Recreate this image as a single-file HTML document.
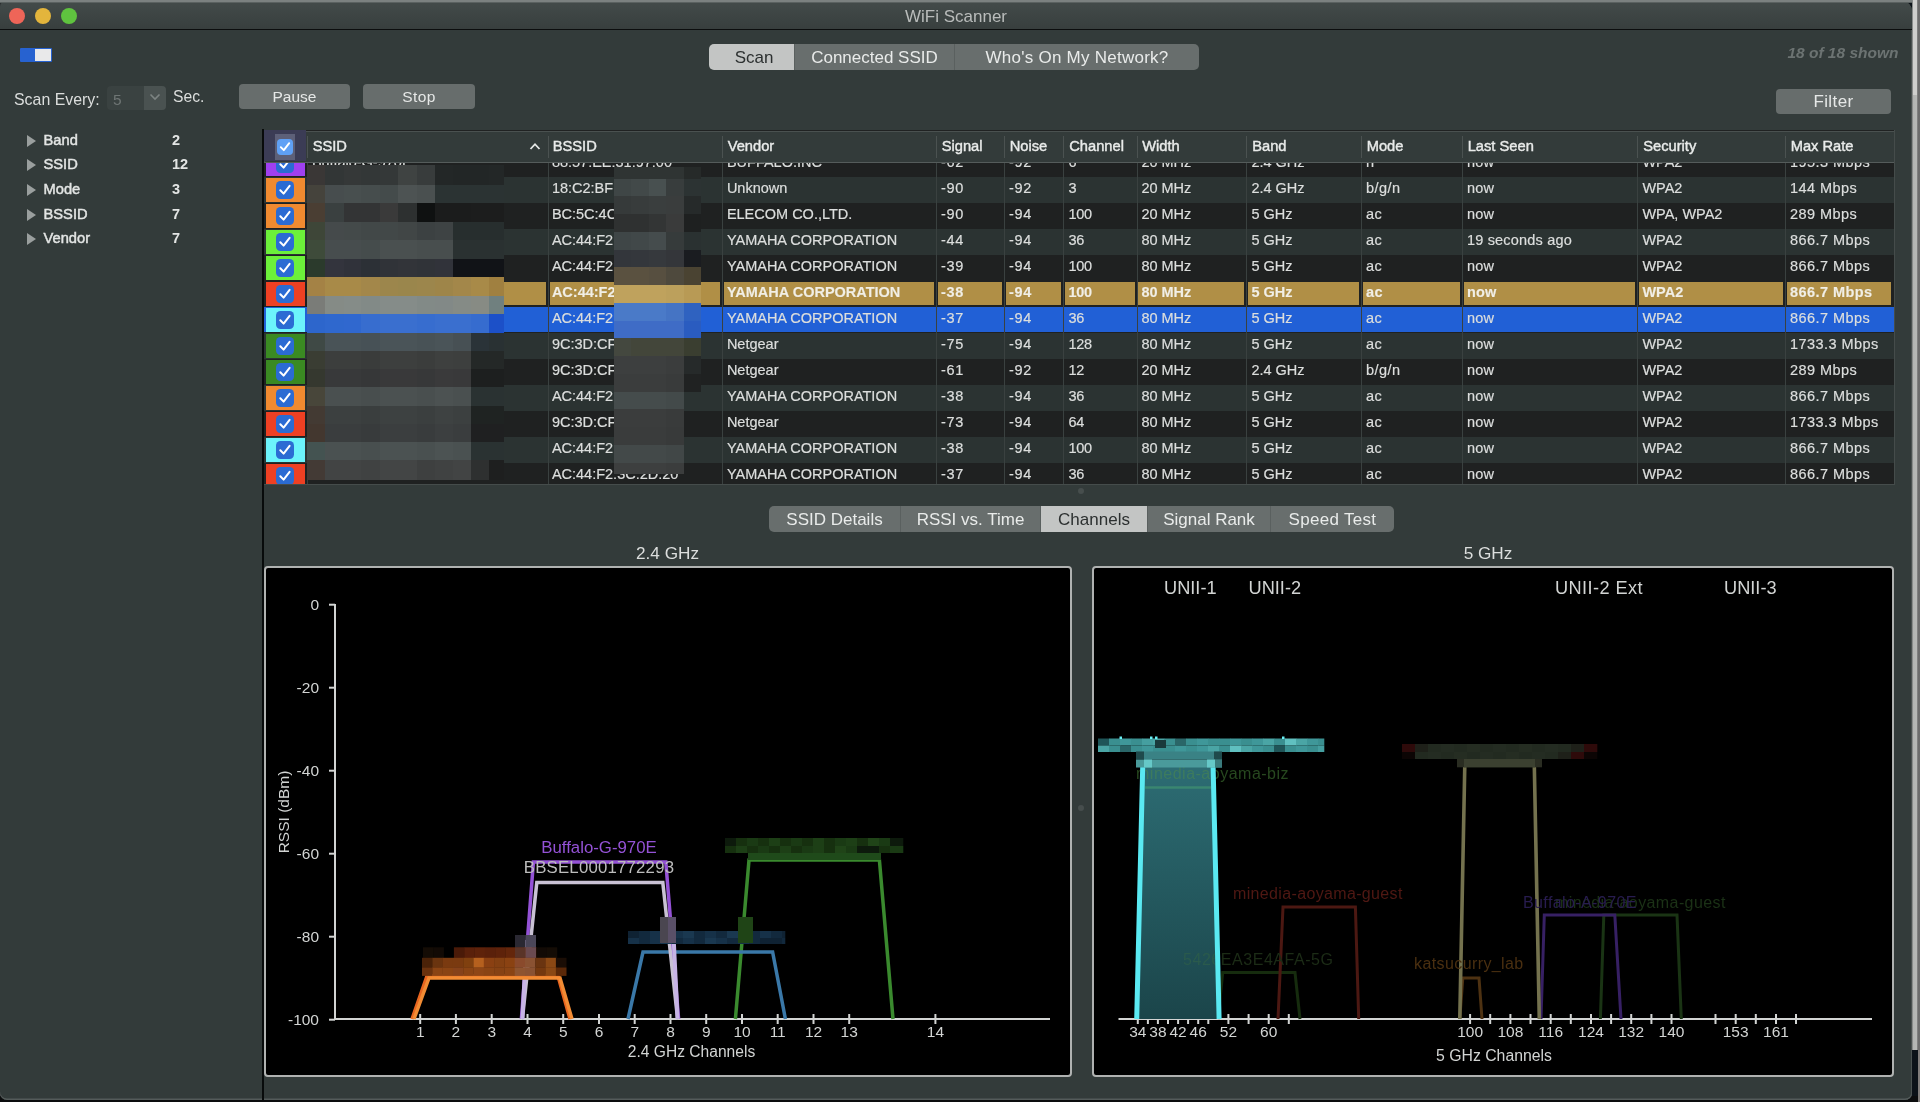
<!DOCTYPE html><html><head><meta charset='utf-8'><title>WiFi Scanner</title><style>
*{box-sizing:border-box;margin:0;padding:0}
html,body{width:1920px;height:1102px;overflow:hidden;background:#2a2e2e}
body{position:relative;font-family:"Liberation Sans",sans-serif;color:#e4e6e5;-webkit-font-smoothing:antialiased}
.abs{position:absolute}
#win{position:absolute;left:0;top:1px;width:1912px;height:1098.5px;background:#333b3a;border-radius:6px 10px 7px 7px;overflow:hidden;box-shadow:inset 0 -1.5px 0 #545b5a, inset -1px 0 0 #4a5150;will-change:transform}
#tbar{position:absolute;left:0;top:0;width:1912px;height:29px;background:linear-gradient(#434b4a,#383f3e);border-bottom:1px solid #0c0e0e}
.tl{position:absolute;top:6.6px;width:16.2px;height:16.2px;border-radius:50%}
#title{position:absolute;left:0;width:1912px;top:6px;text-align:center;font-size:17px;color:#b9bcbb;letter-spacing:0px}
.seg{position:absolute;display:flex;border-radius:5px;overflow:hidden;font-size:17px}
.seg div{height:100%;padding-top:2px;display:flex;align-items:center;justify-content:center;background:#686e6d;color:#e9ebea;border-right:1px solid #5a605f;white-space:nowrap}
.seg div.on{background:#c3c5c4;color:#2c3030}
.seg div:last-child{border-right:0}
.btn{position:absolute;background:#676d6c;border-radius:4px;color:#e6e8e7;font-size:15.5px;display:flex;align-items:center;justify-content:center}
.side{position:absolute;left:0;font-size:14.7px;font-weight:400;-webkit-text-stroke:0.45px #e3e5e4;color:#e3e5e4;height:20px;line-height:20px;width:250px}
.side i{position:absolute;left:27px;top:5.3px;width:0;height:0;border-left:9.6px solid #9a9f9e;border-top:6px solid transparent;border-bottom:6px solid transparent}
.side span{position:absolute;left:43.5px}
.side b{position:absolute;left:172px;-webkit-text-stroke:0;font-size:14.5px}
#tbl{position:absolute;left:263.7px;top:129px;width:1631px;height:354.5px;overflow:hidden;background:#202222}
.row{position:absolute;left:0;width:1631px;height:26px}
.row.l{background:#2b3332}.row.d{background:#1f2121}
.cell{position:absolute;top:-1.8px;height:26px;line-height:26px;font-size:14.5px;color:#dcdedd;-webkit-text-stroke:0.2px #dcdedd;white-space:nowrap;overflow:hidden}
.vsep{position:absolute;top:32px;width:1px;height:322px;background:#3a4140}
.sw{position:absolute;left:2.3px;top:1.4px;width:39.4px;height:23.8px}
.cb{position:absolute;left:10.2px;top:2.8px;width:18px;height:18px;border-radius:4.5px;background:#2b6bd3}
.cb svg{position:absolute;left:0;top:0}
#hdr{position:absolute;left:0;top:1.2px;width:1631px;height:32px;background:#333b3a;border:1px solid #4a5150;border-bottom:1px solid #555c5b}
.hc{position:absolute;top:-0.9px;height:30px;line-height:30px;font-size:14.7px;font-weight:400;-webkit-text-stroke:0.4px #e9ebea;color:#e9ebea;white-space:nowrap}
.hs{position:absolute;top:4px;width:1px;height:22px;background:#4b5251}
.gold .cell{color:#f3efe4;font-weight:700}
.g{position:absolute;top:1.9px;height:22.2px;background:#b08f46}
.m{position:absolute}
.panel{position:absolute;background:#000;border:2px solid #b0b2b1;border-radius:4px}
svg text{font-family:"Liberation Sans",sans-serif}
</style></head><body>
<div class='abs' style='left:1905px;top:0;width:15px;height:1102px;background:#0c1218'></div>
<div class='abs' style='left:1912px;top:0;width:8px;height:1050px;background:linear-gradient(90deg,#6a6d6c 0,#b2b4b2 1.2px,#b7b8b6 5.2px,#6d6d6d 5.6px,#6c6c6c 8px)'></div>
<div class='abs' style='left:1912.8px;top:0;width:4.5px;height:95px;background:#cfcfcd'></div>
<div class='abs' style='left:1917.5px;top:1050px;width:2.5px;height:52px;background:#807c7a'></div>
<div class='abs' style='left:0;top:1096px;width:1917.5px;height:6px;background:#0c0d0e'></div>
<div id='win'>
<div id='tbar'></div>
<div class='tl' style='left:8.8px;background:#ee6558'></div>
<div class='tl' style='left:34.7px;background:#e3b53c'></div>
<div class='tl' style='left:60.7px;background:#5fc33f'></div>
<div id='title'>WiFi Scanner</div>
<div class='abs' style='left:20px;top:47px;width:32px;height:14px;background:#2762d0;border-radius:1px'></div>
<div class='abs' style='left:35px;top:48px;width:16px;height:12px;background:#e9e9ea'></div>
<div class='seg' style='left:709px;top:43px;width:490px;height:26px'><div class='on' style='width:86px;padding-left:5px'>Scan</div><div style='width:160px'>Connected SSID</div><div style='width:244px;letter-spacing:0.25px'>Who's On My Network?</div></div>
<div class='abs' style='left:1778.5px;top:43px;width:120px;text-align:right;font-size:15.5px;font-weight:700;font-style:italic;color:#6c7372;white-space:nowrap'>18 of 18 shown</div>
<div class='abs' style='left:14px;top:90px;font-size:15.9px;color:#dcdedd;white-space:nowrap'>Scan Every:</div>
<div class='abs' style='left:107px;top:85px;width:59px;height:24px;background:#3a4241;border-radius:4px'></div>
<div class='abs' style='left:144px;top:85px;width:22px;height:24px;background:#4a5251;border-radius:0 4px 4px 0'></div>
<div class='abs' style='left:113px;top:90px;font-size:15.5px;color:#6e7574'>5</div>
<svg class='abs' style='left:149px;top:92px' width='12' height='8'><path d='M1.5 1.5 L6 6 L10.5 1.5' fill='none' stroke='#7d8483' stroke-width='1.6'/></svg>
<div class='abs' style='left:173px;top:87px;font-size:15.7px;color:#dcdedd'>Sec.</div>
<div class='btn' style='left:239px;top:83px;width:111px;height:25px'>Pause</div>
<div class='btn' style='left:363px;top:83px;width:112px;height:25px;letter-spacing:0.4px'>Stop</div>
<div class='btn' style='left:1776px;top:88px;width:115px;height:25px;font-size:17px;letter-spacing:0.4px'>Filter</div>
<div class='side' style='top:128.5px'><i></i><span>Band</span><b>2</b></div>
<div class='side' style='top:153.2px'><i></i><span>SSID</span><b>12</b></div>
<div class='side' style='top:177.8px'><i></i><span>Mode</span><b>3</b></div>
<div class='side' style='top:202.5px'><i></i><span>BSSID</span><b>7</b></div>
<div class='side' style='top:227.2px'><i></i><span>Vendor</span><b>7</b></div>
<div class='abs' style='left:262px;top:128px;width:2px;height:972px;background:#080b0b'></div>
<div id='tbl'>
<div class='row d' style='top:20.6px'>
<div class='sw' style='background:#a040f0'><div class='cb'><svg width='18' height='18'><path d='M4.3 9.2 L7.6 12.6 L13.6 4.8' fill='none' stroke='#fff' stroke-width='2' stroke-linecap='round' stroke-linejoin='round'/></svg></div></div>
<div class='cell' style='left:48.2px;width:233.8px'>Buffalo-G-970E</div>
<div class='cell' style='left:288.2px;width:167.8px'>88:57:EE:31:97:00</div>
<div class='cell' style='left:463.2px;width:206.8px'>BUFFALO.INC</div>
<div class='cell' style='left:677.2px;width:60.799999999999955px;letter-spacing:0.75px'>-62</div>
<div class='cell' style='left:745.2px;width:51.799999999999955px;letter-spacing:0.75px'>-92</div>
<div class='cell' style='left:804.7px;width:65.79999999999995px;letter-spacing:-0.2px'>6</div>
<div class='cell' style='left:877.7px;width:102.29999999999995px'>20 MHz</div>
<div class='cell' style='left:987.7px;width:107.29999999999995px'>2.4 GHz</div>
<div class='cell' style='left:1102.2px;width:93.79999999999995px;letter-spacing:0.5px'>n</div>
<div class='cell' style='left:1203.2px;width:167.79999999999995px;letter-spacing:0.2px'>now</div>
<div class='cell' style='left:1378.7px;width:140.29999999999995px'>WPA2</div>
<div class='cell' style='left:1526.2px;width:100.79999999999995px;letter-spacing:0.45px'>195.3 Mbps</div>
</div>
<div class='row l' style='top:46.6px'>
<div class='sw' style='background:#f08a30'><div class='cb'><svg width='18' height='18'><path d='M4.3 9.2 L7.6 12.6 L13.6 4.8' fill='none' stroke='#fff' stroke-width='2' stroke-linecap='round' stroke-linejoin='round'/></svg></div></div>
<div class='cell' style='left:288.2px;width:167.8px'>18:C2:BF</div>
<div class='cell' style='left:463.2px;width:206.8px'>Unknown</div>
<div class='cell' style='left:677.2px;width:60.799999999999955px;letter-spacing:0.75px'>-90</div>
<div class='cell' style='left:745.2px;width:51.799999999999955px;letter-spacing:0.75px'>-92</div>
<div class='cell' style='left:804.7px;width:65.79999999999995px;letter-spacing:-0.2px'>3</div>
<div class='cell' style='left:877.7px;width:102.29999999999995px'>20 MHz</div>
<div class='cell' style='left:987.7px;width:107.29999999999995px'>2.4 GHz</div>
<div class='cell' style='left:1102.2px;width:93.79999999999995px;letter-spacing:0.5px'>b/g/n</div>
<div class='cell' style='left:1203.2px;width:167.79999999999995px;letter-spacing:0.2px'>now</div>
<div class='cell' style='left:1378.7px;width:140.29999999999995px'>WPA2</div>
<div class='cell' style='left:1526.2px;width:100.79999999999995px;letter-spacing:0.45px'>144 Mbps</div>
</div>
<div class='row d' style='top:72.6px'>
<div class='sw' style='background:#f08a30'><div class='cb'><svg width='18' height='18'><path d='M4.3 9.2 L7.6 12.6 L13.6 4.8' fill='none' stroke='#fff' stroke-width='2' stroke-linecap='round' stroke-linejoin='round'/></svg></div></div>
<div class='cell' style='left:288.2px;width:167.8px'>BC:5C:4C</div>
<div class='cell' style='left:463.2px;width:206.8px'>ELECOM CO.,LTD.</div>
<div class='cell' style='left:677.2px;width:60.799999999999955px;letter-spacing:0.75px'>-90</div>
<div class='cell' style='left:745.2px;width:51.799999999999955px;letter-spacing:0.75px'>-94</div>
<div class='cell' style='left:804.7px;width:65.79999999999995px;letter-spacing:-0.2px'>100</div>
<div class='cell' style='left:877.7px;width:102.29999999999995px'>20 MHz</div>
<div class='cell' style='left:987.7px;width:107.29999999999995px'>5 GHz</div>
<div class='cell' style='left:1102.2px;width:93.79999999999995px;letter-spacing:0.5px'>ac</div>
<div class='cell' style='left:1203.2px;width:167.79999999999995px;letter-spacing:0.2px'>now</div>
<div class='cell' style='left:1378.7px;width:140.29999999999995px'>WPA, WPA2</div>
<div class='cell' style='left:1526.2px;width:100.79999999999995px;letter-spacing:0.45px'>289 Mbps</div>
</div>
<div class='row l' style='top:98.6px'>
<div class='sw' style='background:#6cf03a'><div class='cb'><svg width='18' height='18'><path d='M4.3 9.2 L7.6 12.6 L13.6 4.8' fill='none' stroke='#fff' stroke-width='2' stroke-linecap='round' stroke-linejoin='round'/></svg></div></div>
<div class='cell' style='left:288.2px;width:167.8px'>AC:44:F2</div>
<div class='cell' style='left:463.2px;width:206.8px'>YAMAHA CORPORATION</div>
<div class='cell' style='left:677.2px;width:60.799999999999955px;letter-spacing:0.75px'>-44</div>
<div class='cell' style='left:745.2px;width:51.799999999999955px;letter-spacing:0.75px'>-94</div>
<div class='cell' style='left:804.7px;width:65.79999999999995px;letter-spacing:-0.2px'>36</div>
<div class='cell' style='left:877.7px;width:102.29999999999995px'>80 MHz</div>
<div class='cell' style='left:987.7px;width:107.29999999999995px'>5 GHz</div>
<div class='cell' style='left:1102.2px;width:93.79999999999995px;letter-spacing:0.5px'>ac</div>
<div class='cell' style='left:1203.2px;width:167.79999999999995px;letter-spacing:0.2px'>19 seconds ago</div>
<div class='cell' style='left:1378.7px;width:140.29999999999995px'>WPA2</div>
<div class='cell' style='left:1526.2px;width:100.79999999999995px;letter-spacing:0.45px'>866.7 Mbps</div>
</div>
<div class='row d' style='top:124.6px'>
<div class='sw' style='background:#6cf03a'><div class='cb'><svg width='18' height='18'><path d='M4.3 9.2 L7.6 12.6 L13.6 4.8' fill='none' stroke='#fff' stroke-width='2' stroke-linecap='round' stroke-linejoin='round'/></svg></div></div>
<div class='cell' style='left:288.2px;width:167.8px'>AC:44:F2</div>
<div class='cell' style='left:463.2px;width:206.8px'>YAMAHA CORPORATION</div>
<div class='cell' style='left:677.2px;width:60.799999999999955px;letter-spacing:0.75px'>-39</div>
<div class='cell' style='left:745.2px;width:51.799999999999955px;letter-spacing:0.75px'>-94</div>
<div class='cell' style='left:804.7px;width:65.79999999999995px;letter-spacing:-0.2px'>100</div>
<div class='cell' style='left:877.7px;width:102.29999999999995px'>80 MHz</div>
<div class='cell' style='left:987.7px;width:107.29999999999995px'>5 GHz</div>
<div class='cell' style='left:1102.2px;width:93.79999999999995px;letter-spacing:0.5px'>ac</div>
<div class='cell' style='left:1203.2px;width:167.79999999999995px;letter-spacing:0.2px'>now</div>
<div class='cell' style='left:1378.7px;width:140.29999999999995px'>WPA2</div>
<div class='cell' style='left:1526.2px;width:100.79999999999995px;letter-spacing:0.45px'>866.7 Mbps</div>
</div>
<div class='row d gold' style='top:150.6px'>
<div class='g' style='left:44px;width:238.5px'></div>
<div class='g' style='left:286px;width:170.5px'></div>
<div class='g' style='left:460px;width:210.5px'></div>
<div class='g' style='left:674px;width:64.5px'></div>
<div class='g' style='left:742px;width:55.5px'></div>
<div class='g' style='left:801px;width:70.0px'></div>
<div class='g' style='left:874.5px;width:106.0px'></div>
<div class='g' style='left:984px;width:111.5px'></div>
<div class='g' style='left:1099px;width:97.5px'></div>
<div class='g' style='left:1200px;width:171.5px'></div>
<div class='g' style='left:1375px;width:144.5px'></div>
<div class='g' style='left:1523px;width:104.5px'></div>
<div class='sw' style='background:#ee4023'><div class='cb'><svg width='18' height='18'><path d='M4.3 9.2 L7.6 12.6 L13.6 4.8' fill='none' stroke='#fff' stroke-width='2' stroke-linecap='round' stroke-linejoin='round'/></svg></div></div>
<div class='cell' style='left:288.2px;width:167.8px'>AC:44:F2</div>
<div class='cell' style='left:463.2px;width:206.8px'>YAMAHA CORPORATION</div>
<div class='cell' style='left:677.2px;width:60.799999999999955px;letter-spacing:0.75px'>-38</div>
<div class='cell' style='left:745.2px;width:51.799999999999955px;letter-spacing:0.75px'>-94</div>
<div class='cell' style='left:804.7px;width:65.79999999999995px;letter-spacing:-0.2px'>100</div>
<div class='cell' style='left:877.7px;width:102.29999999999995px'>80 MHz</div>
<div class='cell' style='left:987.7px;width:107.29999999999995px'>5 GHz</div>
<div class='cell' style='left:1102.2px;width:93.79999999999995px;letter-spacing:0.5px'>ac</div>
<div class='cell' style='left:1203.2px;width:167.79999999999995px;letter-spacing:0.2px'>now</div>
<div class='cell' style='left:1378.7px;width:140.29999999999995px'>WPA2</div>
<div class='cell' style='left:1526.2px;width:100.79999999999995px;letter-spacing:0.45px'>866.7 Mbps</div>
</div>
<div class='row d' style='top:176.6px;background:linear-gradient(#1f2121 0,#1f2121 0.4px,#2160d6 0.4px,#2160d6 25px,#1f2121 25px)'>
<div class='sw' style='background:#6cf3fb'><div class='cb'><svg width='18' height='18'><path d='M4.3 9.2 L7.6 12.6 L13.6 4.8' fill='none' stroke='#fff' stroke-width='2' stroke-linecap='round' stroke-linejoin='round'/></svg></div></div>
<div class='cell' style='left:288.2px;width:167.8px'>AC:44:F2</div>
<div class='cell' style='left:463.2px;width:206.8px'>YAMAHA CORPORATION</div>
<div class='cell' style='left:677.2px;width:60.799999999999955px;letter-spacing:0.75px'>-37</div>
<div class='cell' style='left:745.2px;width:51.799999999999955px;letter-spacing:0.75px'>-94</div>
<div class='cell' style='left:804.7px;width:65.79999999999995px;letter-spacing:-0.2px'>36</div>
<div class='cell' style='left:877.7px;width:102.29999999999995px'>80 MHz</div>
<div class='cell' style='left:987.7px;width:107.29999999999995px'>5 GHz</div>
<div class='cell' style='left:1102.2px;width:93.79999999999995px;letter-spacing:0.5px'>ac</div>
<div class='cell' style='left:1203.2px;width:167.79999999999995px;letter-spacing:0.2px'>now</div>
<div class='cell' style='left:1378.7px;width:140.29999999999995px'>WPA2</div>
<div class='cell' style='left:1526.2px;width:100.79999999999995px;letter-spacing:0.45px'>866.7 Mbps</div>
</div>
<div class='row l' style='top:202.6px'>
<div class='sw' style='background:#3a8a22'><div class='cb'><svg width='18' height='18'><path d='M4.3 9.2 L7.6 12.6 L13.6 4.8' fill='none' stroke='#fff' stroke-width='2' stroke-linecap='round' stroke-linejoin='round'/></svg></div></div>
<div class='cell' style='left:288.2px;width:167.8px'>9C:3D:CF</div>
<div class='cell' style='left:463.2px;width:206.8px'>Netgear</div>
<div class='cell' style='left:677.2px;width:60.799999999999955px;letter-spacing:0.75px'>-75</div>
<div class='cell' style='left:745.2px;width:51.799999999999955px;letter-spacing:0.75px'>-94</div>
<div class='cell' style='left:804.7px;width:65.79999999999995px;letter-spacing:-0.2px'>128</div>
<div class='cell' style='left:877.7px;width:102.29999999999995px'>80 MHz</div>
<div class='cell' style='left:987.7px;width:107.29999999999995px'>5 GHz</div>
<div class='cell' style='left:1102.2px;width:93.79999999999995px;letter-spacing:0.5px'>ac</div>
<div class='cell' style='left:1203.2px;width:167.79999999999995px;letter-spacing:0.2px'>now</div>
<div class='cell' style='left:1378.7px;width:140.29999999999995px'>WPA2</div>
<div class='cell' style='left:1526.2px;width:100.79999999999995px;letter-spacing:0.45px'>1733.3 Mbps</div>
</div>
<div class='row d' style='top:228.6px'>
<div class='sw' style='background:#3a8a22'><div class='cb'><svg width='18' height='18'><path d='M4.3 9.2 L7.6 12.6 L13.6 4.8' fill='none' stroke='#fff' stroke-width='2' stroke-linecap='round' stroke-linejoin='round'/></svg></div></div>
<div class='cell' style='left:288.2px;width:167.8px'>9C:3D:CF</div>
<div class='cell' style='left:463.2px;width:206.8px'>Netgear</div>
<div class='cell' style='left:677.2px;width:60.799999999999955px;letter-spacing:0.75px'>-61</div>
<div class='cell' style='left:745.2px;width:51.799999999999955px;letter-spacing:0.75px'>-92</div>
<div class='cell' style='left:804.7px;width:65.79999999999995px;letter-spacing:-0.2px'>12</div>
<div class='cell' style='left:877.7px;width:102.29999999999995px'>20 MHz</div>
<div class='cell' style='left:987.7px;width:107.29999999999995px'>2.4 GHz</div>
<div class='cell' style='left:1102.2px;width:93.79999999999995px;letter-spacing:0.5px'>b/g/n</div>
<div class='cell' style='left:1203.2px;width:167.79999999999995px;letter-spacing:0.2px'>now</div>
<div class='cell' style='left:1378.7px;width:140.29999999999995px'>WPA2</div>
<div class='cell' style='left:1526.2px;width:100.79999999999995px;letter-spacing:0.45px'>289 Mbps</div>
</div>
<div class='row l' style='top:254.6px'>
<div class='sw' style='background:#f08a30'><div class='cb'><svg width='18' height='18'><path d='M4.3 9.2 L7.6 12.6 L13.6 4.8' fill='none' stroke='#fff' stroke-width='2' stroke-linecap='round' stroke-linejoin='round'/></svg></div></div>
<div class='cell' style='left:288.2px;width:167.8px'>AC:44:F2</div>
<div class='cell' style='left:463.2px;width:206.8px'>YAMAHA CORPORATION</div>
<div class='cell' style='left:677.2px;width:60.799999999999955px;letter-spacing:0.75px'>-38</div>
<div class='cell' style='left:745.2px;width:51.799999999999955px;letter-spacing:0.75px'>-94</div>
<div class='cell' style='left:804.7px;width:65.79999999999995px;letter-spacing:-0.2px'>36</div>
<div class='cell' style='left:877.7px;width:102.29999999999995px'>80 MHz</div>
<div class='cell' style='left:987.7px;width:107.29999999999995px'>5 GHz</div>
<div class='cell' style='left:1102.2px;width:93.79999999999995px;letter-spacing:0.5px'>ac</div>
<div class='cell' style='left:1203.2px;width:167.79999999999995px;letter-spacing:0.2px'>now</div>
<div class='cell' style='left:1378.7px;width:140.29999999999995px'>WPA2</div>
<div class='cell' style='left:1526.2px;width:100.79999999999995px;letter-spacing:0.45px'>866.7 Mbps</div>
</div>
<div class='row d' style='top:280.6px'>
<div class='sw' style='background:#ee4023'><div class='cb'><svg width='18' height='18'><path d='M4.3 9.2 L7.6 12.6 L13.6 4.8' fill='none' stroke='#fff' stroke-width='2' stroke-linecap='round' stroke-linejoin='round'/></svg></div></div>
<div class='cell' style='left:288.2px;width:167.8px'>9C:3D:CF</div>
<div class='cell' style='left:463.2px;width:206.8px'>Netgear</div>
<div class='cell' style='left:677.2px;width:60.799999999999955px;letter-spacing:0.75px'>-73</div>
<div class='cell' style='left:745.2px;width:51.799999999999955px;letter-spacing:0.75px'>-94</div>
<div class='cell' style='left:804.7px;width:65.79999999999995px;letter-spacing:-0.2px'>64</div>
<div class='cell' style='left:877.7px;width:102.29999999999995px'>80 MHz</div>
<div class='cell' style='left:987.7px;width:107.29999999999995px'>5 GHz</div>
<div class='cell' style='left:1102.2px;width:93.79999999999995px;letter-spacing:0.5px'>ac</div>
<div class='cell' style='left:1203.2px;width:167.79999999999995px;letter-spacing:0.2px'>now</div>
<div class='cell' style='left:1378.7px;width:140.29999999999995px'>WPA2</div>
<div class='cell' style='left:1526.2px;width:100.79999999999995px;letter-spacing:0.45px'>1733.3 Mbps</div>
</div>
<div class='row l' style='top:306.6px'>
<div class='sw' style='background:#6cf3fb'><div class='cb'><svg width='18' height='18'><path d='M4.3 9.2 L7.6 12.6 L13.6 4.8' fill='none' stroke='#fff' stroke-width='2' stroke-linecap='round' stroke-linejoin='round'/></svg></div></div>
<div class='cell' style='left:288.2px;width:167.8px'>AC:44:F2</div>
<div class='cell' style='left:463.2px;width:206.8px'>YAMAHA CORPORATION</div>
<div class='cell' style='left:677.2px;width:60.799999999999955px;letter-spacing:0.75px'>-38</div>
<div class='cell' style='left:745.2px;width:51.799999999999955px;letter-spacing:0.75px'>-94</div>
<div class='cell' style='left:804.7px;width:65.79999999999995px;letter-spacing:-0.2px'>100</div>
<div class='cell' style='left:877.7px;width:102.29999999999995px'>80 MHz</div>
<div class='cell' style='left:987.7px;width:107.29999999999995px'>5 GHz</div>
<div class='cell' style='left:1102.2px;width:93.79999999999995px;letter-spacing:0.5px'>ac</div>
<div class='cell' style='left:1203.2px;width:167.79999999999995px;letter-spacing:0.2px'>now</div>
<div class='cell' style='left:1378.7px;width:140.29999999999995px'>WPA2</div>
<div class='cell' style='left:1526.2px;width:100.79999999999995px;letter-spacing:0.45px'>866.7 Mbps</div>
</div>
<div class='row d' style='top:332.6px'>
<div class='sw' style='background:#ee4023'><div class='cb'><svg width='18' height='18'><path d='M4.3 9.2 L7.6 12.6 L13.6 4.8' fill='none' stroke='#fff' stroke-width='2' stroke-linecap='round' stroke-linejoin='round'/></svg></div></div>
<div class='cell' style='left:288.2px;width:167.8px'>AC:44:F2:3C:2D:20</div>
<div class='cell' style='left:463.2px;width:206.8px'>YAMAHA CORPORATION</div>
<div class='cell' style='left:677.2px;width:60.799999999999955px;letter-spacing:0.75px'>-37</div>
<div class='cell' style='left:745.2px;width:51.799999999999955px;letter-spacing:0.75px'>-94</div>
<div class='cell' style='left:804.7px;width:65.79999999999995px;letter-spacing:-0.2px'>36</div>
<div class='cell' style='left:877.7px;width:102.29999999999995px'>80 MHz</div>
<div class='cell' style='left:987.7px;width:107.29999999999995px'>5 GHz</div>
<div class='cell' style='left:1102.2px;width:93.79999999999995px;letter-spacing:0.5px'>ac</div>
<div class='cell' style='left:1203.2px;width:167.79999999999995px;letter-spacing:0.2px'>now</div>
<div class='cell' style='left:1378.7px;width:140.29999999999995px'>WPA2</div>
<div class='cell' style='left:1526.2px;width:100.79999999999995px;letter-spacing:0.45px'>866.7 Mbps</div>
</div>
<div class='vsep' style='left:284.5px'></div>
<div class='vsep' style='left:458.5px'></div>
<div class='vsep' style='left:672.5px'></div>
<div class='vsep' style='left:740.5px'></div>
<div class='vsep' style='left:799.5px'></div>
<div class='vsep' style='left:873.0px'></div>
<div class='vsep' style='left:982.5px'></div>
<div class='vsep' style='left:1097.5px'></div>
<div class='vsep' style='left:1198.5px'></div>
<div class='vsep' style='left:1373.5px'></div>
<div class='vsep' style='left:1521.5px'></div>
<div class='vsep' style='left:43px'></div>
<div class='m' style='left:43.7px;top:35.4px;width:18.1px;height:19.6px;background:#3a3736'></div>
<div class='m' style='left:61.5px;top:35.4px;width:18.8px;height:19.6px;background:#323636'></div>
<div class='m' style='left:80px;top:35.4px;width:18.0px;height:19.6px;background:#353838'></div>
<div class='m' style='left:97.7px;top:35.4px;width:18.8px;height:19.6px;background:#333737'></div>
<div class='m' style='left:116.2px;top:35.4px;width:18.9px;height:19.6px;background:#343838'></div>
<div class='m' style='left:134.8px;top:35.4px;width:18.8px;height:19.6px;background:#3f4342'></div>
<div class='m' style='left:153.3px;top:35.4px;width:18.0px;height:19.6px;background:#383c3c'></div>
<div class='m' style='left:171px;top:35.4px;width:18.8px;height:19.6px;background:#232727'></div>
<div class='m' style='left:189.5px;top:35.4px;width:18.1px;height:19.6px;background:#222626'></div>
<div class='m' style='left:207.3px;top:35.4px;width:18.8px;height:19.6px;background:#222626'></div>
<div class='m' style='left:225.8px;top:35.4px;width:15.0px;height:19.6px;background:#232727'></div>
<div class='m' style='left:43.7px;top:54.7px;width:18.1px;height:18.8px;background:#45433c'></div>
<div class='m' style='left:61.5px;top:54.7px;width:18.8px;height:18.8px;background:#474d4e'></div>
<div class='m' style='left:80px;top:54.7px;width:18.0px;height:18.8px;background:#484f4f'></div>
<div class='m' style='left:97.7px;top:54.7px;width:18.8px;height:18.8px;background:#464d4d'></div>
<div class='m' style='left:116.2px;top:54.7px;width:18.9px;height:18.8px;background:#444b4b'></div>
<div class='m' style='left:134.8px;top:54.7px;width:18.8px;height:18.8px;background:#4d5353'></div>
<div class='m' style='left:153.3px;top:54.7px;width:18.0px;height:18.8px;background:#4a5050'></div>
<div class='m' style='left:171px;top:54.7px;width:18.8px;height:18.8px;background:#2b3333'></div>
<div class='m' style='left:189.5px;top:54.7px;width:18.1px;height:18.8px;background:#2b3333'></div>
<div class='m' style='left:207.3px;top:54.7px;width:18.8px;height:18.8px;background:#2b3333'></div>
<div class='m' style='left:225.8px;top:54.7px;width:15.0px;height:18.8px;background:#2b3333'></div>
<div class='m' style='left:43.7px;top:73.2px;width:18.1px;height:18.8px;background:#4a3e33'></div>
<div class='m' style='left:61.5px;top:73.2px;width:18.8px;height:18.8px;background:#3a4040'></div>
<div class='m' style='left:80px;top:73.2px;width:18.0px;height:18.8px;background:#333435'></div>
<div class='m' style='left:97.7px;top:73.2px;width:18.8px;height:18.8px;background:#333435'></div>
<div class='m' style='left:116.2px;top:73.2px;width:18.9px;height:18.8px;background:#3a3a3a'></div>
<div class='m' style='left:134.8px;top:73.2px;width:18.8px;height:18.8px;background:#2d3030'></div>
<div class='m' style='left:153.3px;top:73.2px;width:18.0px;height:18.8px;background:#0f1111'></div>
<div class='m' style='left:171px;top:73.2px;width:18.8px;height:18.8px;background:#1b1c1c'></div>
<div class='m' style='left:189.5px;top:73.2px;width:18.1px;height:18.8px;background:#1b1c1c'></div>
<div class='m' style='left:207.3px;top:73.2px;width:18.8px;height:18.8px;background:#1c1d1d'></div>
<div class='m' style='left:225.8px;top:73.2px;width:15.0px;height:18.8px;background:#1c1d1d'></div>
<div class='m' style='left:43.7px;top:91.7px;width:18.1px;height:18.8px;background:#3e4638'></div>
<div class='m' style='left:61.5px;top:91.7px;width:18.8px;height:18.8px;background:#454a4b'></div>
<div class='m' style='left:80px;top:91.7px;width:18.0px;height:18.8px;background:#444a4a'></div>
<div class='m' style='left:97.7px;top:91.7px;width:18.8px;height:18.8px;background:#424848'></div>
<div class='m' style='left:116.2px;top:91.7px;width:18.9px;height:18.8px;background:#424848'></div>
<div class='m' style='left:134.8px;top:91.7px;width:18.8px;height:18.8px;background:#414646'></div>
<div class='m' style='left:153.3px;top:91.7px;width:18.0px;height:18.8px;background:#3c4142'></div>
<div class='m' style='left:171px;top:91.7px;width:18.8px;height:18.8px;background:#3e4344'></div>
<div class='m' style='left:189.5px;top:91.7px;width:18.1px;height:18.8px;background:#272e2e'></div>
<div class='m' style='left:207.3px;top:91.7px;width:18.8px;height:18.8px;background:#272e2e'></div>
<div class='m' style='left:225.8px;top:91.7px;width:15.0px;height:18.8px;background:#272e2e'></div>
<div class='m' style='left:43.7px;top:110.2px;width:18.1px;height:18.8px;background:#3e4b3a'></div>
<div class='m' style='left:61.5px;top:110.2px;width:18.8px;height:18.8px;background:#474d4e'></div>
<div class='m' style='left:80px;top:110.2px;width:18.0px;height:18.8px;background:#474d4e'></div>
<div class='m' style='left:97.7px;top:110.2px;width:18.8px;height:18.8px;background:#454c4c'></div>
<div class='m' style='left:116.2px;top:110.2px;width:18.9px;height:18.8px;background:#4a5050'></div>
<div class='m' style='left:134.8px;top:110.2px;width:18.8px;height:18.8px;background:#4a5050'></div>
<div class='m' style='left:153.3px;top:110.2px;width:18.0px;height:18.8px;background:#484e4e'></div>
<div class='m' style='left:171px;top:110.2px;width:18.8px;height:18.8px;background:#484e4e'></div>
<div class='m' style='left:189.5px;top:110.2px;width:18.1px;height:18.8px;background:#2a3131'></div>
<div class='m' style='left:207.3px;top:110.2px;width:18.8px;height:18.8px;background:#2a3131'></div>
<div class='m' style='left:225.8px;top:110.2px;width:15.0px;height:18.8px;background:#2a3131'></div>
<div class='m' style='left:43.7px;top:128.7px;width:18.1px;height:18.8px;background:#2b3a2c'></div>
<div class='m' style='left:61.5px;top:128.7px;width:18.8px;height:18.8px;background:#33343d'></div>
<div class='m' style='left:80px;top:128.7px;width:18.0px;height:18.8px;background:#30323a'></div>
<div class='m' style='left:97.7px;top:128.7px;width:18.8px;height:18.8px;background:#2c3036'></div>
<div class='m' style='left:116.2px;top:128.7px;width:18.9px;height:18.8px;background:#303338'></div>
<div class='m' style='left:134.8px;top:128.7px;width:18.8px;height:18.8px;background:#323439'></div>
<div class='m' style='left:153.3px;top:128.7px;width:18.0px;height:18.8px;background:#303338'></div>
<div class='m' style='left:171px;top:128.7px;width:18.8px;height:18.8px;background:#31333a'></div>
<div class='m' style='left:189.5px;top:128.7px;width:18.1px;height:18.8px;background:#111317'></div>
<div class='m' style='left:207.3px;top:128.7px;width:18.8px;height:18.8px;background:#111317'></div>
<div class='m' style='left:225.8px;top:128.7px;width:15.0px;height:18.8px;background:#111317'></div>
<div class='m' style='left:43.7px;top:147.2px;width:18.1px;height:18.8px;background:#a48245'></div>
<div class='m' style='left:61.5px;top:147.2px;width:18.8px;height:18.8px;background:#a88a48'></div>
<div class='m' style='left:80px;top:147.2px;width:18.0px;height:18.8px;background:#a88a48'></div>
<div class='m' style='left:97.7px;top:147.2px;width:18.8px;height:18.8px;background:#a3874a'></div>
<div class='m' style='left:116.2px;top:147.2px;width:18.9px;height:18.8px;background:#9c864c'></div>
<div class='m' style='left:134.8px;top:147.2px;width:18.8px;height:18.8px;background:#9a864c'></div>
<div class='m' style='left:153.3px;top:147.2px;width:18.0px;height:18.8px;background:#9c864c'></div>
<div class='m' style='left:171px;top:147.2px;width:18.8px;height:18.8px;background:#9e8549'></div>
<div class='m' style='left:189.5px;top:147.2px;width:18.1px;height:18.8px;background:#a3874a'></div>
<div class='m' style='left:207.3px;top:147.2px;width:18.8px;height:18.8px;background:#a88a48'></div>
<div class='m' style='left:225.8px;top:147.2px;width:15.0px;height:18.8px;background:#a08040'></div>
<div class='m' style='left:43.7px;top:165.7px;width:18.1px;height:18.8px;background:#7a7c78'></div>
<div class='m' style='left:61.5px;top:165.7px;width:18.8px;height:18.8px;background:#858b86'></div>
<div class='m' style='left:80px;top:165.7px;width:18.0px;height:18.8px;background:#858c88'></div>
<div class='m' style='left:97.7px;top:165.7px;width:18.8px;height:18.8px;background:#828a87'></div>
<div class='m' style='left:116.2px;top:165.7px;width:18.9px;height:18.8px;background:#858c89'></div>
<div class='m' style='left:134.8px;top:165.7px;width:18.8px;height:18.8px;background:#858c89'></div>
<div class='m' style='left:153.3px;top:165.7px;width:18.0px;height:18.8px;background:#828a87'></div>
<div class='m' style='left:171px;top:165.7px;width:18.8px;height:18.8px;background:#828987'></div>
<div class='m' style='left:189.5px;top:165.7px;width:18.1px;height:18.8px;background:#858b86'></div>
<div class='m' style='left:207.3px;top:165.7px;width:18.8px;height:18.8px;background:#878b84'></div>
<div class='m' style='left:225.8px;top:165.7px;width:15.0px;height:18.8px;background:#70807f'></div>
<div class='m' style='left:43.7px;top:184.2px;width:18.1px;height:18.8px;background:#2d66cc'></div>
<div class='m' style='left:61.5px;top:184.2px;width:18.8px;height:18.8px;background:#2f68ce'></div>
<div class='m' style='left:80px;top:184.2px;width:18.0px;height:18.8px;background:#3068cf'></div>
<div class='m' style='left:97.7px;top:184.2px;width:18.8px;height:18.8px;background:#376dcf'></div>
<div class='m' style='left:116.2px;top:184.2px;width:18.9px;height:18.8px;background:#3a6fcf'></div>
<div class='m' style='left:134.8px;top:184.2px;width:18.8px;height:18.8px;background:#3a6fcf'></div>
<div class='m' style='left:153.3px;top:184.2px;width:18.0px;height:18.8px;background:#376dcf'></div>
<div class='m' style='left:171px;top:184.2px;width:18.8px;height:18.8px;background:#3a6fcf'></div>
<div class='m' style='left:189.5px;top:184.2px;width:18.1px;height:18.8px;background:#3a6fcf'></div>
<div class='m' style='left:207.3px;top:184.2px;width:18.8px;height:18.8px;background:#366ccf'></div>
<div class='m' style='left:225.8px;top:184.2px;width:15.0px;height:18.8px;background:#1c50c8'></div>
<div class='m' style='left:43.7px;top:202.7px;width:18.1px;height:18.1px;background:#3f4945'></div>
<div class='m' style='left:61.5px;top:202.7px;width:18.8px;height:18.1px;background:#495357'></div>
<div class='m' style='left:80px;top:202.7px;width:18.0px;height:18.1px;background:#495357'></div>
<div class='m' style='left:97.7px;top:202.7px;width:18.8px;height:18.1px;background:#475156'></div>
<div class='m' style='left:116.2px;top:202.7px;width:18.9px;height:18.1px;background:#4a5458'></div>
<div class='m' style='left:134.8px;top:202.7px;width:18.8px;height:18.1px;background:#4a5458'></div>
<div class='m' style='left:153.3px;top:202.7px;width:18.0px;height:18.1px;background:#485256'></div>
<div class='m' style='left:171px;top:202.7px;width:18.8px;height:18.1px;background:#4a5458'></div>
<div class='m' style='left:189.5px;top:202.7px;width:18.1px;height:18.1px;background:#475054'></div>
<div class='m' style='left:207.3px;top:202.7px;width:18.8px;height:18.1px;background:#2a3338'></div>
<div class='m' style='left:225.8px;top:202.7px;width:15.0px;height:18.1px;background:#293133'></div>
<div class='m' style='left:43.7px;top:220.5px;width:18.1px;height:18.4px;background:#3a3d33'></div>
<div class='m' style='left:61.5px;top:220.5px;width:18.8px;height:18.4px;background:#3c3e3d'></div>
<div class='m' style='left:80px;top:220.5px;width:18.0px;height:18.4px;background:#3c3e3d'></div>
<div class='m' style='left:97.7px;top:220.5px;width:18.8px;height:18.4px;background:#3a3c3b'></div>
<div class='m' style='left:116.2px;top:220.5px;width:18.9px;height:18.4px;background:#3d3f3e'></div>
<div class='m' style='left:134.8px;top:220.5px;width:18.8px;height:18.4px;background:#3d3f3e'></div>
<div class='m' style='left:153.3px;top:220.5px;width:18.0px;height:18.4px;background:#3b3d3c'></div>
<div class='m' style='left:171px;top:220.5px;width:18.8px;height:18.4px;background:#3e403f'></div>
<div class='m' style='left:189.5px;top:220.5px;width:18.1px;height:18.4px;background:#3d3f3e'></div>
<div class='m' style='left:207.3px;top:220.5px;width:18.8px;height:18.4px;background:#242827'></div>
<div class='m' style='left:225.8px;top:220.5px;width:15.0px;height:18.4px;background:#242827'></div>
<div class='m' style='left:43.7px;top:238.6px;width:18.1px;height:18.7px;background:#35382f'></div>
<div class='m' style='left:61.5px;top:238.6px;width:18.8px;height:18.7px;background:#38393a'></div>
<div class='m' style='left:80px;top:238.6px;width:18.0px;height:18.7px;background:#38393a'></div>
<div class='m' style='left:97.7px;top:238.6px;width:18.8px;height:18.7px;background:#363738'></div>
<div class='m' style='left:116.2px;top:238.6px;width:18.9px;height:18.7px;background:#39393a'></div>
<div class='m' style='left:134.8px;top:238.6px;width:18.8px;height:18.7px;background:#39393a'></div>
<div class='m' style='left:153.3px;top:238.6px;width:18.0px;height:18.7px;background:#373839'></div>
<div class='m' style='left:171px;top:238.6px;width:18.8px;height:18.7px;background:#3a3a3b'></div>
<div class='m' style='left:189.5px;top:238.6px;width:18.1px;height:18.7px;background:#39393a'></div>
<div class='m' style='left:207.3px;top:238.6px;width:18.8px;height:18.7px;background:#1d1f1f'></div>
<div class='m' style='left:225.8px;top:238.6px;width:15.0px;height:18.7px;background:#1d1f1f'></div>
<div class='m' style='left:43.7px;top:257px;width:18.1px;height:18.9px;background:#48463a'></div>
<div class='m' style='left:61.5px;top:257px;width:18.8px;height:18.9px;background:#4a5050'></div>
<div class='m' style='left:80px;top:257px;width:18.0px;height:18.9px;background:#4a5050'></div>
<div class='m' style='left:97.7px;top:257px;width:18.8px;height:18.9px;background:#484e4e'></div>
<div class='m' style='left:116.2px;top:257px;width:18.9px;height:18.9px;background:#4b5151'></div>
<div class='m' style='left:134.8px;top:257px;width:18.8px;height:18.9px;background:#4b5151'></div>
<div class='m' style='left:153.3px;top:257px;width:18.0px;height:18.9px;background:#494f4f'></div>
<div class='m' style='left:171px;top:257px;width:18.8px;height:18.9px;background:#4c5252'></div>
<div class='m' style='left:189.5px;top:257px;width:18.1px;height:18.9px;background:#4a5050'></div>
<div class='m' style='left:207.3px;top:257px;width:18.8px;height:18.9px;background:#2a3232'></div>
<div class='m' style='left:225.8px;top:257px;width:15.0px;height:18.9px;background:#2a3232'></div>
<div class='m' style='left:43.7px;top:275.6px;width:18.1px;height:18.7px;background:#433a33'></div>
<div class='m' style='left:61.5px;top:275.6px;width:18.8px;height:18.7px;background:#3c4040'></div>
<div class='m' style='left:80px;top:275.6px;width:18.0px;height:18.7px;background:#3c4040'></div>
<div class='m' style='left:97.7px;top:275.6px;width:18.8px;height:18.7px;background:#3a3e3e'></div>
<div class='m' style='left:116.2px;top:275.6px;width:18.9px;height:18.7px;background:#3d4141'></div>
<div class='m' style='left:134.8px;top:275.6px;width:18.8px;height:18.7px;background:#3d4141'></div>
<div class='m' style='left:153.3px;top:275.6px;width:18.0px;height:18.7px;background:#3b3f3f'></div>
<div class='m' style='left:171px;top:275.6px;width:18.8px;height:18.7px;background:#3e4242'></div>
<div class='m' style='left:189.5px;top:275.6px;width:18.1px;height:18.7px;background:#3c4040'></div>
<div class='m' style='left:207.3px;top:275.6px;width:18.8px;height:18.7px;background:#1f2322'></div>
<div class='m' style='left:225.8px;top:275.6px;width:15.0px;height:18.7px;background:#1f2322'></div>
<div class='m' style='left:43.7px;top:294px;width:18.1px;height:18.3px;background:#43372f'></div>
<div class='m' style='left:61.5px;top:294px;width:18.8px;height:18.3px;background:#3a3d3e'></div>
<div class='m' style='left:80px;top:294px;width:18.0px;height:18.3px;background:#3a3d3e'></div>
<div class='m' style='left:97.7px;top:294px;width:18.8px;height:18.3px;background:#383b3c'></div>
<div class='m' style='left:116.2px;top:294px;width:18.9px;height:18.3px;background:#3b3e3f'></div>
<div class='m' style='left:134.8px;top:294px;width:18.8px;height:18.3px;background:#3b3e3f'></div>
<div class='m' style='left:153.3px;top:294px;width:18.0px;height:18.3px;background:#393c3d'></div>
<div class='m' style='left:171px;top:294px;width:18.8px;height:18.3px;background:#3c3f40'></div>
<div class='m' style='left:189.5px;top:294px;width:18.1px;height:18.3px;background:#3a3d3e'></div>
<div class='m' style='left:207.3px;top:294px;width:18.8px;height:18.3px;background:#1f2021'></div>
<div class='m' style='left:225.8px;top:294px;width:15.0px;height:18.3px;background:#1f2021'></div>
<div class='m' style='left:43.7px;top:312px;width:18.1px;height:18.7px;background:#445351'></div>
<div class='m' style='left:61.5px;top:312px;width:18.8px;height:18.7px;background:#4a5151'></div>
<div class='m' style='left:80px;top:312px;width:18.0px;height:18.7px;background:#4a5151'></div>
<div class='m' style='left:97.7px;top:312px;width:18.8px;height:18.7px;background:#484f4f'></div>
<div class='m' style='left:116.2px;top:312px;width:18.9px;height:18.7px;background:#4b5252'></div>
<div class='m' style='left:134.8px;top:312px;width:18.8px;height:18.7px;background:#4b5252'></div>
<div class='m' style='left:153.3px;top:312px;width:18.0px;height:18.7px;background:#495050'></div>
<div class='m' style='left:171px;top:312px;width:18.8px;height:18.7px;background:#4c5353'></div>
<div class='m' style='left:189.5px;top:312px;width:18.1px;height:18.7px;background:#4a5151'></div>
<div class='m' style='left:207.3px;top:312px;width:18.8px;height:18.7px;background:#2a3232'></div>
<div class='m' style='left:225.8px;top:312px;width:15.0px;height:18.7px;background:#2a3232'></div>
<div class='m' style='left:43.7px;top:330.4px;width:18.1px;height:19.6px;background:#433a35'></div>
<div class='m' style='left:61.5px;top:330.4px;width:18.8px;height:19.6px;background:#424444'></div>
<div class='m' style='left:80px;top:330.4px;width:18.0px;height:19.6px;background:#424444'></div>
<div class='m' style='left:97.7px;top:330.4px;width:18.8px;height:19.6px;background:#404242'></div>
<div class='m' style='left:116.2px;top:330.4px;width:18.9px;height:19.6px;background:#434545'></div>
<div class='m' style='left:134.8px;top:330.4px;width:18.8px;height:19.6px;background:#434545'></div>
<div class='m' style='left:153.3px;top:330.4px;width:18.0px;height:19.6px;background:#3e4040'></div>
<div class='m' style='left:171px;top:330.4px;width:18.8px;height:19.6px;background:#404242'></div>
<div class='m' style='left:189.5px;top:330.4px;width:18.1px;height:19.6px;background:#424444'></div>
<div class='m' style='left:207.3px;top:330.4px;width:18.8px;height:19.6px;background:#2e3030'></div>
<div class='m' style='left:225.8px;top:330.4px;width:15.0px;height:19.6px;background:#1e1f1f'></div>
<div class='m' style='left:350px;top:37px;width:17.8px;height:11.8px;background:#2f3433'></div>
<div class='m' style='left:367.5px;top:37px;width:17.8px;height:11.8px;background:#2f3433'></div>
<div class='m' style='left:385px;top:37px;width:17.8px;height:11.8px;background:#2f3433'></div>
<div class='m' style='left:402.5px;top:37px;width:17.8px;height:11.8px;background:#2f3433'></div>
<div class='m' style='left:420px;top:37px;width:17.8px;height:11.8px;background:#262a29'></div>
<div class='m' style='left:350px;top:48.5px;width:17.8px;height:18.1px;background:#3f4646'></div>
<div class='m' style='left:367.5px;top:48.5px;width:17.8px;height:18.1px;background:#424949'></div>
<div class='m' style='left:385px;top:48.5px;width:17.8px;height:18.1px;background:#485050'></div>
<div class='m' style='left:402.5px;top:48.5px;width:17.8px;height:18.1px;background:#383d3d'></div>
<div class='m' style='left:420px;top:48.5px;width:17.8px;height:18.1px;background:#2c3333'></div>
<div class='m' style='left:350px;top:66.3px;width:17.8px;height:18.0px;background:#363a3a'></div>
<div class='m' style='left:367.5px;top:66.3px;width:17.8px;height:18.0px;background:#383c3c'></div>
<div class='m' style='left:385px;top:66.3px;width:17.8px;height:18.0px;background:#3a3e3e'></div>
<div class='m' style='left:402.5px;top:66.3px;width:17.8px;height:18.0px;background:#3a3d3d'></div>
<div class='m' style='left:420px;top:66.3px;width:17.8px;height:18.0px;background:#262a2a'></div>
<div class='m' style='left:350px;top:84px;width:17.8px;height:18.1px;background:#2f3131'></div>
<div class='m' style='left:367.5px;top:84px;width:17.8px;height:18.1px;background:#2f3131'></div>
<div class='m' style='left:385px;top:84px;width:17.8px;height:18.1px;background:#333535'></div>
<div class='m' style='left:402.5px;top:84px;width:17.8px;height:18.1px;background:#3a3b3b'></div>
<div class='m' style='left:420px;top:84px;width:17.8px;height:18.1px;background:#1e2020'></div>
<div class='m' style='left:350px;top:101.8px;width:17.8px;height:18.0px;background:#3f4647'></div>
<div class='m' style='left:367.5px;top:101.8px;width:17.8px;height:18.0px;background:#414849'></div>
<div class='m' style='left:385px;top:101.8px;width:17.8px;height:18.0px;background:#454c4d'></div>
<div class='m' style='left:402.5px;top:101.8px;width:17.8px;height:18.0px;background:#363b3b'></div>
<div class='m' style='left:420px;top:101.8px;width:17.8px;height:18.0px;background:#2a3131'></div>
<div class='m' style='left:350px;top:119.5px;width:17.8px;height:18.1px;background:#33363b'></div>
<div class='m' style='left:367.5px;top:119.5px;width:17.8px;height:18.1px;background:#34373c'></div>
<div class='m' style='left:385px;top:119.5px;width:17.8px;height:18.1px;background:#36393d'></div>
<div class='m' style='left:402.5px;top:119.5px;width:17.8px;height:18.1px;background:#34363a'></div>
<div class='m' style='left:420px;top:119.5px;width:17.8px;height:18.1px;background:#1a1c20'></div>
<div class='m' style='left:350px;top:137.3px;width:17.8px;height:18.0px;background:#5a5140'></div>
<div class='m' style='left:367.5px;top:137.3px;width:17.8px;height:18.0px;background:#5a5140'></div>
<div class='m' style='left:385px;top:137.3px;width:17.8px;height:18.0px;background:#574f40'></div>
<div class='m' style='left:402.5px;top:137.3px;width:17.8px;height:18.0px;background:#4e493d'></div>
<div class='m' style='left:420px;top:137.3px;width:17.8px;height:18.0px;background:#4a4332'></div>
<div class='m' style='left:350px;top:155px;width:17.8px;height:18.1px;background:#bfa25d'></div>
<div class='m' style='left:367.5px;top:155px;width:17.8px;height:18.1px;background:#bfa25d'></div>
<div class='m' style='left:385px;top:155px;width:17.8px;height:18.1px;background:#bfa25d'></div>
<div class='m' style='left:402.5px;top:155px;width:17.8px;height:18.1px;background:#bca05c'></div>
<div class='m' style='left:420px;top:155px;width:17.8px;height:18.1px;background:#b89a55'></div>
<div class='m' style='left:350px;top:172.8px;width:17.8px;height:18.0px;background:#4a7ac8'></div>
<div class='m' style='left:367.5px;top:172.8px;width:17.8px;height:18.0px;background:#4a7ac8'></div>
<div class='m' style='left:385px;top:172.8px;width:17.8px;height:18.0px;background:#4a7ac8'></div>
<div class='m' style='left:402.5px;top:172.8px;width:17.8px;height:18.0px;background:#4574c4'></div>
<div class='m' style='left:420px;top:172.8px;width:17.8px;height:18.0px;background:#2f62c0'></div>
<div class='m' style='left:350px;top:190.5px;width:17.8px;height:18.1px;background:#3f6cc6'></div>
<div class='m' style='left:367.5px;top:190.5px;width:17.8px;height:18.1px;background:#3f6cc6'></div>
<div class='m' style='left:385px;top:190.5px;width:17.8px;height:18.1px;background:#3f6cc6'></div>
<div class='m' style='left:402.5px;top:190.5px;width:17.8px;height:18.1px;background:#3f6cc6'></div>
<div class='m' style='left:420px;top:190.5px;width:17.8px;height:18.1px;background:#2a5cc0'></div>
<div class='m' style='left:350px;top:208.3px;width:17.8px;height:18.0px;background:#44483f'></div>
<div class='m' style='left:367.5px;top:208.3px;width:17.8px;height:18.0px;background:#43463a'></div>
<div class='m' style='left:385px;top:208.3px;width:17.8px;height:18.0px;background:#43463a'></div>
<div class='m' style='left:402.5px;top:208.3px;width:17.8px;height:18.0px;background:#43463a'></div>
<div class='m' style='left:420px;top:208.3px;width:17.8px;height:18.0px;background:#3a3e30'></div>
<div class='m' style='left:350px;top:226px;width:17.8px;height:18.1px;background:#3d3f3f'></div>
<div class='m' style='left:367.5px;top:226px;width:17.8px;height:18.1px;background:#3d3f3f'></div>
<div class='m' style='left:385px;top:226px;width:17.8px;height:18.1px;background:#3d3f3f'></div>
<div class='m' style='left:402.5px;top:226px;width:17.8px;height:18.1px;background:#3b3d3d'></div>
<div class='m' style='left:420px;top:226px;width:17.8px;height:18.1px;background:#262a2a'></div>
<div class='m' style='left:350px;top:243.8px;width:17.8px;height:18.0px;background:#3b3d3d'></div>
<div class='m' style='left:367.5px;top:243.8px;width:17.8px;height:18.0px;background:#3b3d3d'></div>
<div class='m' style='left:385px;top:243.8px;width:17.8px;height:18.0px;background:#3b3d3d'></div>
<div class='m' style='left:402.5px;top:243.8px;width:17.8px;height:18.0px;background:#393b3b'></div>
<div class='m' style='left:420px;top:243.8px;width:17.8px;height:18.0px;background:#202222'></div>
<div class='m' style='left:350px;top:261.5px;width:17.8px;height:18.1px;background:#454c4c'></div>
<div class='m' style='left:367.5px;top:261.5px;width:17.8px;height:18.1px;background:#454c4c'></div>
<div class='m' style='left:385px;top:261.5px;width:17.8px;height:18.1px;background:#454c4c'></div>
<div class='m' style='left:402.5px;top:261.5px;width:17.8px;height:18.1px;background:#434a4a'></div>
<div class='m' style='left:350px;top:279.3px;width:17.8px;height:18.0px;background:#3b3d3d'></div>
<div class='m' style='left:367.5px;top:279.3px;width:17.8px;height:18.0px;background:#3b3d3d'></div>
<div class='m' style='left:385px;top:279.3px;width:17.8px;height:18.0px;background:#3b3d3d'></div>
<div class='m' style='left:402.5px;top:279.3px;width:17.8px;height:18.0px;background:#393b3b'></div>
<div class='m' style='left:350px;top:297px;width:17.8px;height:18.1px;background:#3a3c3c'></div>
<div class='m' style='left:367.5px;top:297px;width:17.8px;height:18.1px;background:#3a3c3c'></div>
<div class='m' style='left:385px;top:297px;width:17.8px;height:18.1px;background:#3a3c3c'></div>
<div class='m' style='left:402.5px;top:297px;width:17.8px;height:18.1px;background:#383a3a'></div>
<div class='m' style='left:350px;top:314.8px;width:17.8px;height:18.0px;background:#434949'></div>
<div class='m' style='left:367.5px;top:314.8px;width:17.8px;height:18.0px;background:#434949'></div>
<div class='m' style='left:385px;top:314.8px;width:17.8px;height:18.0px;background:#434949'></div>
<div class='m' style='left:402.5px;top:314.8px;width:17.8px;height:18.0px;background:#414747'></div>
<div class='m' style='left:350px;top:332.5px;width:17.8px;height:11.8px;background:#3d3f3f'></div>
<div class='m' style='left:367.5px;top:332.5px;width:17.8px;height:11.8px;background:#3d3f3f'></div>
<div class='m' style='left:385px;top:332.5px;width:17.8px;height:11.8px;background:#3d3f3f'></div>
<div class='m' style='left:402.5px;top:332.5px;width:17.8px;height:11.8px;background:#3b3d3d'></div>
<div id='hdr'>
<div class='abs' style='left:-1px;top:-2.2px;width:42.3px;height:31px;background:#3b3c55'></div><div class='abs' style='left:10.3px;top:2px;width:19.7px;height:25.8px;background:#5d6078'></div>
<div class='abs' style='left:12.5px;top:7px;width:15.8px;height:15.8px;border-radius:4px;background:#5fa0f5'><svg width='16' height='16' style='position:absolute;left:0;top:0'><path d='M3.8 8.2 L6.8 11.2 L12.2 4.2' fill='none' stroke='#fff' stroke-width='1.9' stroke-linecap='round' stroke-linejoin='round'/></svg></div>
<div class='hc' style='left:48px'>SSID</div>
<div class='hc' style='left:288px'>BSSID</div>
<div class='hs' style='left:283.5px'></div>
<div class='hc' style='left:463px'>Vendor</div>
<div class='hs' style='left:457.5px'></div>
<div class='hc' style='left:677px'>Signal</div>
<div class='hs' style='left:671.5px'></div>
<div class='hc' style='left:745px'>Noise</div>
<div class='hs' style='left:739.5px'></div>
<div class='hc' style='left:804.5px'>Channel</div>
<div class='hs' style='left:798.5px'></div>
<div class='hc' style='left:877.5px'>Width</div>
<div class='hs' style='left:872.0px'></div>
<div class='hc' style='left:987.5px'>Band</div>
<div class='hs' style='left:981.5px'></div>
<div class='hc' style='left:1102px'>Mode</div>
<div class='hs' style='left:1096.5px'></div>
<div class='hc' style='left:1203px'>Last Seen</div>
<div class='hs' style='left:1197.5px'></div>
<div class='hc' style='left:1378.5px'>Security</div>
<div class='hs' style='left:1372.5px'></div>
<div class='hc' style='left:1526px'>Max Rate</div>
<div class='hs' style='left:1520.5px'></div>
<div class='hs' style='left:42px'></div>
<svg class='abs' style='left:264px;top:10px' width='12' height='9'><path d='M1.5 7 L6 2.2 L10.5 7' fill='none' stroke='#e6e8e7' stroke-width='1.8'/></svg>
</div>
<div class='abs' style='left:0;top:0;width:1631px;height:354.5px;border:1px solid #454c4b;border-top:0;border-left:0;pointer-events:none'></div>
</div>
<div class='abs' style='left:1078px;top:487px;width:6px;height:6px;border-radius:50%;background:#474e4d'></div>
<div class='abs' style='left:1078px;top:804px;width:6px;height:6px;border-radius:50%;background:#474e4d'></div>
<div class='seg' style='left:769px;top:505px;width:625px;height:26px'><div style='width:132px'>SSID Details</div><div style='width:140px'>RSSI vs. Time</div><div class='on' style='width:107px'>Channels</div><div style='width:123px'>Signal Rank</div><div style='width:123px;letter-spacing:0.3px'>Speed Test</div></div>
<div class='abs' style='left:567.5px;top:541.5px;width:200px;text-align:center;font-size:17.2px;color:#dcdedd'>2.4 GHz</div>
<div class='abs' style='left:1388px;top:541.5px;width:200px;text-align:center;font-size:17.2px;color:#dcdedd'>5 GHz</div>
<div class='panel' style='left:263.5px;top:564.7px;width:808.5px;height:511.8px'></div>
<div class='panel' style='left:1092px;top:564.7px;width:802px;height:511.8px'></div>
<svg class='abs' style='left:0;top:-1px' width='1912' height='1100' viewBox='0 0 1912 1100'>
<g stroke='#d2d4d3' stroke-width='2' fill='none'>
<path d='M335 604 V1019 H1050'/>
<path d='M329 604.7 H335'/>
<path d='M329 687.7 H335'/>
<path d='M329 770.7 H335'/>
<path d='M329 853.7 H335'/>
<path d='M329 936.7 H335'/>
<path d='M329 1019.7 H335'/>
<path d='M420.2 1014 V1024'/>
<path d='M455.9 1014 V1024'/>
<path d='M491.7 1014 V1024'/>
<path d='M527.5 1014 V1024'/>
<path d='M563.2 1014 V1024'/>
<path d='M599.0 1014 V1024'/>
<path d='M634.7 1014 V1024'/>
<path d='M670.5 1014 V1024'/>
<path d='M706.2 1014 V1024'/>
<path d='M742.0 1014 V1024'/>
<path d='M777.7 1014 V1024'/>
<path d='M813.5 1014 V1024'/>
<path d='M849.2 1014 V1024'/>
<path d='M935.4 1014 V1024'/>
</g>
<g fill='#d2d4d3' font-size='15.5' text-anchor='end'>
<text x='319' y='610.2'>0</text>
<text x='319' y='693.2'>-20</text>
<text x='319' y='776.2'>-40</text>
<text x='319' y='859.2'>-60</text>
<text x='319' y='942.2'>-80</text>
<text x='319' y='1025.2'>-100</text>
</g>
<g fill='#d2d4d3' font-size='15.5' text-anchor='middle'>
<text x='420.2' y='1037'>1</text>
<text x='455.9' y='1037'>2</text>
<text x='491.7' y='1037'>3</text>
<text x='527.5' y='1037'>4</text>
<text x='563.2' y='1037'>5</text>
<text x='599.0' y='1037'>6</text>
<text x='634.7' y='1037'>7</text>
<text x='670.5' y='1037'>8</text>
<text x='706.2' y='1037'>9</text>
<text x='742.0' y='1037'>10</text>
<text x='777.7' y='1037'>11</text>
<text x='813.5' y='1037'>12</text>
<text x='849.2' y='1037'>13</text>
<text x='935.4' y='1037'>14</text>
<text x='691.5' y='1057' font-size='15.6'>2.4 GHz Channels</text>
<text transform='translate(289 812) rotate(-90)' font-size='15.5'>RSSI (dBm)</text>
</g>
<path d='M735.4 1019 L749 860 L879.4 860 L893 1019' fill='none' stroke='#3a8a2e' stroke-width='3.5' stroke-linejoin='miter' />
<path d='M628 1019 L643 952 L772.6 952 L785.4 1019' fill='none' stroke='#3a78a8' stroke-width='3.5' stroke-linejoin='miter' />
<path d='M521.4 1019 L533.4 862 L665.8 862 L678.6 1019' fill='none' stroke='#9452d6' stroke-width='3.5' stroke-linejoin='miter' />
<path d='M522.4 1019 L536.8 882.5 L662.8 882.5 L677.6 1019' fill='none' stroke='#c9c2d4' stroke-width='3.5' stroke-linejoin='miter' />
<path d='M526.5 940 L522.4 1019 M673 925 L677.6 1019' stroke='#c8b4e6' stroke-width='4' fill='none'/>
<path d='M412 1019 L427 976 L558 976 L570 1019' fill='none' stroke='#e8651f' stroke-width='3.5' stroke-linejoin='miter' />
<path d='M414 1019 L429 978 L560 978 L572 1019' fill='none' stroke='#f28c34' stroke-width='3.5' stroke-linejoin='miter' />
<text x='599' y='853' fill='#9452d6' font-size='16.8' text-anchor='middle'>Buffalo-G-970E</text>
<text x='599' y='873' fill='#bdbdbd' font-size='16.8' text-anchor='middle' letter-spacing='0.2'>BBSEL0001772293</text>
<rect x='725' y='838' width='11.3' height='8' fill='#0d1a0c'/>
<rect x='725' y='846' width='11.3' height='7' fill='#16300f'/>
<rect x='736' y='838' width='11.3' height='8' fill='#16300f'/>
<rect x='736' y='846' width='11.3' height='7' fill='#1d3f16'/>
<rect x='747' y='838' width='11.3' height='8' fill='#1a3a14'/>
<rect x='747' y='846' width='11.3' height='7' fill='#16300f'/>
<rect x='758' y='838' width='11.3' height='8' fill='#16300f'/>
<rect x='758' y='846' width='11.3' height='7' fill='#1a3a14'/>
<rect x='769' y='838' width='11.3' height='8' fill='#1d3f16'/>
<rect x='769' y='846' width='11.3' height='7' fill='#16300f'/>
<rect x='780' y='838' width='11.3' height='8' fill='#16300f'/>
<rect x='780' y='846' width='11.3' height='7' fill='#1d3f16'/>
<rect x='791' y='838' width='11.3' height='8' fill='#1a3a14'/>
<rect x='791' y='846' width='11.3' height='7' fill='#16300f'/>
<rect x='802' y='838' width='11.3' height='8' fill='#16300f'/>
<rect x='802' y='846' width='11.3' height='7' fill='#1a3a14'/>
<rect x='813' y='838' width='11.3' height='8' fill='#1d3f16'/>
<rect x='813' y='846' width='11.3' height='7' fill='#1d3f16'/>
<rect x='824' y='838' width='11.3' height='8' fill='#16300f'/>
<rect x='824' y='846' width='11.3' height='7' fill='#16300f'/>
<rect x='835' y='838' width='11.3' height='8' fill='#1a3a14'/>
<rect x='835' y='846' width='11.3' height='7' fill='#204418'/>
<rect x='846' y='838' width='11.3' height='8' fill='#1d3f16'/>
<rect x='846' y='846' width='11.3' height='7' fill='#1a3a14'/>
<rect x='857' y='838' width='11.3' height='8' fill='#16300f'/>
<rect x='857' y='846' width='11.3' height='7' fill='#0d1a0c'/>
<rect x='868' y='838' width='11.3' height='8' fill='#204418'/>
<rect x='868' y='846' width='11.3' height='7' fill='#0d1a0c'/>
<rect x='879' y='838' width='11.3' height='8' fill='#1a3a14'/>
<rect x='879' y='846' width='11.3' height='7' fill='#16300f'/>
<rect x='890' y='838' width='13.3' height='8' fill='#0d1a0c'/>
<rect x='890' y='846' width='13.3' height='7' fill='#1a3a14'/>
<rect x='748' y='853' width='133' height='7' fill='#1f4a1a'/>
<rect x='628' y='931' width='11.3' height='7' fill='#0f2233'/>
<rect x='628' y='938' width='11.3' height='6' fill='#163148'/>
<rect x='639' y='931' width='11.3' height='7' fill='#12293d'/>
<rect x='639' y='938' width='11.3' height='6' fill='#12293d'/>
<rect x='650' y='931' width='11.3' height='7' fill='#163148'/>
<rect x='650' y='938' width='11.3' height='6' fill='#163148'/>
<rect x='661' y='931' width='11.3' height='7' fill='#12293d'/>
<rect x='661' y='938' width='11.3' height='6' fill='#1a3850'/>
<rect x='672' y='931' width='11.3' height='7' fill='#163148'/>
<rect x='672' y='938' width='11.3' height='6' fill='#12293d'/>
<rect x='683' y='931' width='11.3' height='7' fill='#1a3850'/>
<rect x='683' y='938' width='11.3' height='6' fill='#163148'/>
<rect x='694' y='931' width='11.3' height='7' fill='#12293d'/>
<rect x='694' y='938' width='11.3' height='6' fill='#12293d'/>
<rect x='705' y='931' width='11.3' height='7' fill='#163148'/>
<rect x='705' y='938' width='11.3' height='6' fill='#1a3850'/>
<rect x='716' y='931' width='11.3' height='7' fill='#12293d'/>
<rect x='716' y='938' width='11.3' height='6' fill='#163148'/>
<rect x='727' y='931' width='11.3' height='7' fill='#1a3850'/>
<rect x='727' y='938' width='11.3' height='6' fill='#12293d'/>
<rect x='738' y='931' width='11.3' height='7' fill='#163148'/>
<rect x='738' y='938' width='11.3' height='6' fill='#163148'/>
<rect x='749' y='931' width='11.3' height='7' fill='#12293d'/>
<rect x='749' y='938' width='11.3' height='6' fill='#12293d'/>
<rect x='760' y='931' width='11.3' height='7' fill='#163148'/>
<rect x='760' y='938' width='11.3' height='6' fill='#0f2233'/>
<rect x='771' y='931' width='11.3' height='7' fill='#12293d'/>
<rect x='771' y='938' width='11.3' height='6' fill='#0f2233'/>
<rect x='782' y='931' width='3.3' height='7' fill='#0f2233'/>
<rect x='782' y='938' width='3.3' height='6' fill='#12293d'/>
<rect x='660' y='917' width='8' height='26' fill='#4a4650'/>
<rect x='668' y='917' width='8' height='26' fill='#5a5068'/>
<rect x='738' y='917' width='15' height='26' fill='#1f4416'/>
<rect x='423.0' y='947.3' width='10.6' height='10.8' fill='#140c05'/>
<rect x='433.3' y='947.3' width='10.6' height='10.8' fill='#120a05'/>
<rect x='453.9' y='947.3' width='10.6' height='10.8' fill='#4a1a08'/>
<rect x='464.2' y='947.3' width='10.6' height='10.8' fill='#5a200a'/>
<rect x='474.5' y='947.3' width='10.6' height='10.8' fill='#5e220a'/>
<rect x='484.8' y='947.3' width='10.6' height='10.8' fill='#5a200a'/>
<rect x='495.1' y='947.3' width='10.6' height='10.8' fill='#5e220a'/>
<rect x='505.4' y='947.3' width='10.6' height='10.8' fill='#64260b'/>
<rect x='515.7' y='947.3' width='10.6' height='10.8' fill='#6a2a0c'/>
<rect x='526.0' y='947.3' width='10.6' height='10.8' fill='#6e2c0e'/>
<rect x='536.3' y='947.3' width='10.6' height='10.8' fill='#120a05'/>
<rect x='546.6' y='947.3' width='10.6' height='10.8' fill='#140c05'/>
<rect x='422.0' y='957.8' width='10.6' height='10.0' fill='#4a2208'/>
<rect x='432.3' y='957.8' width='10.6' height='10.0' fill='#6a340f'/>
<rect x='442.6' y='957.8' width='10.6' height='10.0' fill='#7a3a10'/>
<rect x='452.9' y='957.8' width='10.6' height='10.0' fill='#7a3a10'/>
<rect x='463.2' y='957.8' width='10.6' height='10.0' fill='#80400f'/>
<rect x='473.5' y='957.8' width='10.6' height='10.0' fill='#b5601e'/>
<rect x='483.8' y='957.8' width='10.6' height='10.0' fill='#8a4012'/>
<rect x='494.1' y='957.8' width='10.6' height='10.0' fill='#844012'/>
<rect x='504.4' y='957.8' width='10.6' height='10.0' fill='#8a4212'/>
<rect x='514.7' y='957.8' width='10.6' height='10.0' fill='#8a4a2c'/>
<rect x='525.0' y='957.8' width='10.6' height='10.0' fill='#8a5232'/>
<rect x='535.3' y='957.8' width='10.6' height='10.0' fill='#6a3410'/>
<rect x='545.6' y='957.8' width='10.6' height='10.0' fill='#8a4814'/>
<rect x='555.9' y='957.8' width='10.6' height='10.0' fill='#1a0d05'/>
<rect x='422.0' y='967.5' width='10.6' height='8.4' fill='#6a320e'/>
<rect x='432.3' y='967.5' width='10.6' height='8.4' fill='#8a4414'/>
<rect x='442.6' y='967.5' width='10.6' height='8.4' fill='#8a4414'/>
<rect x='452.9' y='967.5' width='10.6' height='8.4' fill='#86421a'/>
<rect x='463.2' y='967.5' width='10.6' height='8.4' fill='#8a4414'/>
<rect x='473.5' y='967.5' width='10.6' height='8.4' fill='#8e4616'/>
<rect x='483.8' y='967.5' width='10.6' height='8.4' fill='#8a4414'/>
<rect x='494.1' y='967.5' width='10.6' height='8.4' fill='#864214'/>
<rect x='504.4' y='967.5' width='10.6' height='8.4' fill='#8a4414'/>
<rect x='514.7' y='967.5' width='10.6' height='8.4' fill='#8e5430'/>
<rect x='525.0' y='967.5' width='10.6' height='8.4' fill='#8a5232'/>
<rect x='535.3' y='967.5' width='10.6' height='8.4' fill='#74380f'/>
<rect x='545.6' y='967.5' width='10.6' height='8.4' fill='#8a4814'/>
<rect x='555.9' y='967.5' width='10.6' height='8.4' fill='#5a2808'/>
<rect x='515' y='935' width='10.5' height='12.5' fill='#2a2832'/>
<rect x='525.5' y='935' width='10.5' height='12.5' fill='#4a4658'/>
<rect x='515' y='947.3' width='10.5' height='10.5' fill='#5a3428'/>
<rect x='525.5' y='947.3' width='10.5' height='10.5' fill='#6a4a50'/>
<g stroke='#d2d4d3' stroke-width='2' fill='none'>
<path d='M1118.5 1019 H1872'/>
<path d='M1137.8 1014 V1024'/>
<path d='M1147.9 1014 V1024'/>
<path d='M1157.9 1014 V1024'/>
<path d='M1168.0 1014 V1024'/>
<path d='M1178.1 1014 V1024'/>
<path d='M1188.1 1014 V1024'/>
<path d='M1198.2 1014 V1024'/>
<path d='M1208.3 1014 V1024'/>
<path d='M1228.4 1014 V1024'/>
<path d='M1248.6 1014 V1024'/>
<path d='M1268.7 1014 V1024'/>
<path d='M1288.8 1014 V1024'/>
<path d='M1470.1 1014 V1024'/>
<path d='M1490.2 1014 V1024'/>
<path d='M1510.4 1014 V1024'/>
<path d='M1530.5 1014 V1024'/>
<path d='M1550.7 1014 V1024'/>
<path d='M1570.8 1014 V1024'/>
<path d='M1591.0 1014 V1024'/>
<path d='M1611.1 1014 V1024'/>
<path d='M1631.2 1014 V1024'/>
<path d='M1651.4 1014 V1024'/>
<path d='M1671.5 1014 V1024'/>
<path d='M1715.5 1014 V1024'/>
<path d='M1735.7 1014 V1024'/>
<path d='M1755.8 1014 V1024'/>
<path d='M1776 1014 V1024'/>
<path d='M1796 1014 V1024'/>
</g>
<g fill='#d2d4d3' font-size='15.5' text-anchor='middle'>
<text x='1137.8' y='1037'>34</text>
<text x='1157.9' y='1037'>38</text>
<text x='1178.1' y='1037'>42</text>
<text x='1198.2' y='1037'>46</text>
<text x='1228.4' y='1037'>52</text>
<text x='1268.7' y='1037'>60</text>
<text x='1470.1' y='1037'>100</text>
<text x='1510.4' y='1037'>108</text>
<text x='1550.7' y='1037'>116</text>
<text x='1591.0' y='1037'>124</text>
<text x='1631.2' y='1037'>132</text>
<text x='1671.5' y='1037'>140</text>
<text x='1735.7' y='1037'>153</text><text x='1776' y='1037'>161</text>
<text x='1494' y='1061' font-size='15.8'>5 GHz Channels</text>
</g>
<g fill='#d2d4d3' font-size='18.2'>
<text x='1164' y='594'>UNII-1</text><text x='1248.5' y='594'>UNII-2</text><text x='1555' y='594' letter-spacing='0.4'>UNII-2 Ext</text><text x='1724' y='594'>UNII-3</text>
</g>
<path d='M1218 1019 L1222.7 972.5 L1295 972.5 L1300 1019' fill='none' stroke='#162c0e' stroke-width='3'/>
<path d='M1278 1019 L1283 907 L1355.4 907 L1358.7 1019' fill='none' stroke='#4c1812' stroke-width='3'/>
<path d='M1459.8 1019 L1462.8 978 L1479 978 L1482 1019' fill='none' stroke='#4e3212' stroke-width='3'/>
<path d='M1600.4 1019 L1603.8 915 L1677 915 L1681.3 1019' fill='none' stroke='#1a3414' stroke-width='3'/>
<path d='M1541 1019 L1544.3 915 L1614.8 915 L1621 1019' fill='none' stroke='#372064' stroke-width='3'/>
<path d='M1459.8 1019 L1464.8 765 L1534.3 765 L1539.3 1019' fill='none' stroke='#74724e' stroke-width='3.6'/>
<g font-size='16'>
<text x='1136' y='779' fill='#27481f' letter-spacing='0.5'>minedia-aoyama-biz</text>
<text x='1233' y='899' fill='#501813' letter-spacing='0.35'>minedia-aoyama-guest</text>
<text x='1183' y='965' fill='#1c2c16' letter-spacing='0.55'>5426EA3E4AFA-5G</text>
<text x='1414' y='969' fill='#4a2f10' letter-spacing='0.4'>katsucurry_lab</text>
<text x='1555' y='908' fill='#1b3216' letter-spacing='0.4'>minedia-aoyama-guest</text>
<text x='1523' y='908' fill='#281c50' letter-spacing='0.4'>Buffalo-A-970E</text>
</g>
<rect x='1402' y='744' width='13.3' height='8' fill='#2e0a0a'/>
<rect x='1402' y='752' width='13.3' height='7' fill='#0c0504'/>
<rect x='1415' y='744' width='13.3' height='8' fill='#1e2019'/>
<rect x='1415' y='752' width='13.3' height='7' fill='#222a20'/>
<rect x='1428' y='744' width='13.3' height='8' fill='#222a20'/>
<rect x='1428' y='752' width='13.3' height='7' fill='#242c22'/>
<rect x='1441' y='744' width='13.3' height='8' fill='#242c22'/>
<rect x='1441' y='752' width='13.3' height='7' fill='#222a20'/>
<rect x='1454' y='744' width='13.3' height='8' fill='#222a20'/>
<rect x='1454' y='752' width='13.3' height='7' fill='#252d22'/>
<rect x='1467' y='744' width='13.3' height='8' fill='#252d22'/>
<rect x='1467' y='752' width='13.3' height='7' fill='#222a20'/>
<rect x='1480' y='744' width='13.3' height='8' fill='#222a20'/>
<rect x='1480' y='752' width='13.3' height='7' fill='#242c22'/>
<rect x='1493' y='744' width='13.3' height='8' fill='#242c22'/>
<rect x='1493' y='752' width='13.3' height='7' fill='#222a20'/>
<rect x='1506' y='744' width='13.3' height='8' fill='#222a20'/>
<rect x='1506' y='752' width='13.3' height='7' fill='#252d22'/>
<rect x='1519' y='744' width='13.3' height='8' fill='#252d22'/>
<rect x='1519' y='752' width='13.3' height='7' fill='#222a20'/>
<rect x='1532' y='744' width='13.3' height='8' fill='#222a20'/>
<rect x='1532' y='752' width='13.3' height='7' fill='#242c22'/>
<rect x='1545' y='744' width='13.3' height='8' fill='#242c22'/>
<rect x='1545' y='752' width='13.3' height='7' fill='#222a20'/>
<rect x='1558' y='744' width='13.3' height='8' fill='#222a20'/>
<rect x='1558' y='752' width='13.3' height='7' fill='#1e2019'/>
<rect x='1571' y='744' width='13.3' height='8' fill='#1e2019'/>
<rect x='1571' y='752' width='13.3' height='7' fill='#2e0a0a'/>
<rect x='1584' y='744' width='13.3' height='8' fill='#2e0a0a'/>
<rect x='1584' y='752' width='13.3' height='7' fill='#0c0504'/>
<rect x='1457' y='759' width='85' height='8.3' fill='#2a2d22'/>
<rect x='1464' y='759' width='71' height='8.3' fill='#3b4030'/>
<defs><linearGradient id='cg' x1='0' y1='0' x2='0' y2='1'><stop offset='0' stop-color='#2d6d74'/><stop offset='1' stop-color='#1b454a'/></linearGradient></defs>
<path d='M1135.4 1019 L1141.5 762 L1214.3 762 L1220.4 1019 Z' fill='url(#cg)'/>
<path d='M1145 787.5 H1211' stroke='#3a8670' stroke-width='2.5'/>
<clipPath id='cc'><path d='M1135.4 1019 L1141.5 762 L1214.3 762 L1220.4 1019 Z'/></clipPath>
<g clip-path='url(#cc)' font-size='16'><text x='1136' y='779' fill='#3d7b5e' letter-spacing='0.5'>minedia-aoyama-biz</text><text x='1183' y='965' fill='#2a5a4c' letter-spacing='0.55'>5426EA3E4AFA-5G</text></g>
<path d='M1136.7 1019 L1142.8 762 M1213 762 L1219.1 1019' fill='none' stroke='#5ae9f2' stroke-width='5'/>
<rect x='1098' y='738.5' width='11.3' height='7' fill='#1f5558'/>
<rect x='1098' y='745.5' width='11.3' height='6.5' fill='#4aa5a5'/>
<rect x='1109' y='738.5' width='11.3' height='7' fill='#3a8f90'/>
<rect x='1109' y='745.5' width='11.3' height='6.5' fill='#3a8f90'/>
<rect x='1120' y='738.5' width='11.3' height='7' fill='#3f9799'/>
<rect x='1120' y='745.5' width='11.3' height='6.5' fill='#2a6668'/>
<rect x='1131' y='738.5' width='11.3' height='7' fill='#3a8f90'/>
<rect x='1131' y='745.5' width='11.3' height='6.5' fill='#3a8f90'/>
<rect x='1142' y='738.5' width='11.3' height='7' fill='#459fa0'/>
<rect x='1142' y='745.5' width='11.3' height='6.5' fill='#3f9799'/>
<rect x='1153' y='738.5' width='11.3' height='7' fill='#4aa5a5'/>
<rect x='1153' y='745.5' width='11.3' height='6.5' fill='#3a8f90'/>
<rect x='1164' y='738.5' width='11.3' height='7' fill='#3a8f90'/>
<rect x='1164' y='745.5' width='11.3' height='6.5' fill='#3a8f90'/>
<rect x='1175' y='738.5' width='11.3' height='7' fill='#2a6668'/>
<rect x='1175' y='745.5' width='11.3' height='6.5' fill='#3f9799'/>
<rect x='1186' y='738.5' width='11.3' height='7' fill='#3a8f90'/>
<rect x='1186' y='745.5' width='11.3' height='6.5' fill='#3a8f90'/>
<rect x='1197' y='738.5' width='11.3' height='7' fill='#3f9799'/>
<rect x='1197' y='745.5' width='11.3' height='6.5' fill='#3f9799'/>
<rect x='1208' y='738.5' width='11.3' height='7' fill='#3a8f90'/>
<rect x='1208' y='745.5' width='11.3' height='6.5' fill='#4aa5a5'/>
<rect x='1219' y='738.5' width='11.3' height='7' fill='#3a8f90'/>
<rect x='1219' y='745.5' width='11.3' height='6.5' fill='#3a8f90'/>
<rect x='1230' y='738.5' width='11.3' height='7' fill='#3f9799'/>
<rect x='1230' y='745.5' width='11.3' height='6.5' fill='#60c0c0'/>
<rect x='1241' y='738.5' width='11.3' height='7' fill='#3a8f90'/>
<rect x='1241' y='745.5' width='11.3' height='6.5' fill='#4aa5a5'/>
<rect x='1252' y='738.5' width='11.3' height='7' fill='#3f9799'/>
<rect x='1252' y='745.5' width='11.3' height='6.5' fill='#3f9799'/>
<rect x='1263' y='738.5' width='11.3' height='7' fill='#4aa5a5'/>
<rect x='1263' y='745.5' width='11.3' height='6.5' fill='#3a8f90'/>
<rect x='1274' y='738.5' width='11.3' height='7' fill='#3a8f90'/>
<rect x='1274' y='745.5' width='11.3' height='6.5' fill='#1f5558'/>
<rect x='1285' y='738.5' width='11.3' height='7' fill='#60c0c0'/>
<rect x='1285' y='745.5' width='11.3' height='6.5' fill='#3a8f90'/>
<rect x='1296' y='738.5' width='11.3' height='7' fill='#4aa5a5'/>
<rect x='1296' y='745.5' width='11.3' height='6.5' fill='#3f9799'/>
<rect x='1307' y='738.5' width='11.3' height='7' fill='#3f9799'/>
<rect x='1307' y='745.5' width='11.3' height='6.5' fill='#3a8f90'/>
<rect x='1318' y='738.5' width='6.3' height='7' fill='#3a8f90'/>
<rect x='1318' y='745.5' width='6.3' height='6.5' fill='#459fa0'/>
<rect x='1136' y='751.5' width='86' height='8' fill='#3a8285'/>
<rect x='1136' y='759.5' width='86' height='8' fill='#4a9a9b'/>
<rect x='1136' y='751.5' width='8' height='8' fill='#1f4a4c'/>
<rect x='1214' y='751.5' width='8' height='8' fill='#1f4a4c'/>
<rect x='1144' y='759.5' width='8' height='8' fill='#66c8c8'/>
<rect x='1207' y='759.5' width='8' height='8' fill='#66c8c8'/>
<rect x='1215' y='759.5' width='7' height='8' fill='#3a7a7c'/>
<rect x='1155' y='740' width='11' height='8' fill='#1a3a3c'/>
<rect x='1119.5' y='736.5' width='2.5' height='2.5' fill='#6af0f5'/>
<rect x='1150' y='736.5' width='2.5' height='2.5' fill='#6af0f5'/>
<rect x='1155' y='736.5' width='2.5' height='2.5' fill='#6af0f5'/>
<rect x='1282' y='736.5' width='2.5' height='2.5' fill='#6af0f5'/>
</svg>
</div>
<div class='abs' style='left:0;top:0;width:1912px;height:2px;background:#7b8180'></div><div class='abs' style='left:0;top:2px;width:1912px;height:1px;background:#5a6160'></div>
</body></html>
